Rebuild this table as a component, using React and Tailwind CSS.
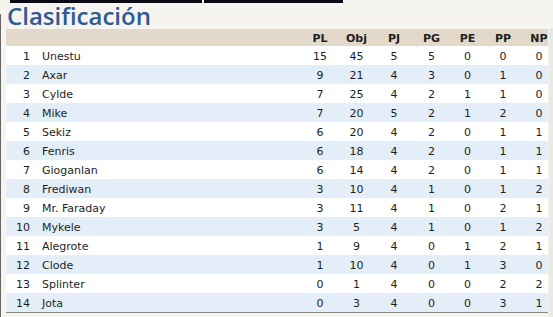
import React from "react";

const rows = [
  [1, "Unestu", 15, 45, 5, 5, 0, 0, 0],
  [2, "Axar", 9, 21, 4, 3, 0, 1, 0],
  [3, "Cylde", 7, 25, 4, 2, 1, 1, 0],
  [4, "Mike", 7, 20, 5, 2, 1, 2, 0],
  [5, "Sekiz", 6, 20, 4, 2, 0, 1, 1],
  [6, "Fenris", 6, 18, 4, 2, 0, 1, 1],
  [7, "Gioganlan", 6, 14, 4, 2, 0, 1, 1],
  [8, "Frediwan", 3, 10, 4, 1, 0, 1, 2],
  [9, "Mr. Faraday", 3, 11, 4, 1, 0, 2, 1],
  [10, "Mykele", 3, 5, 4, 1, 0, 1, 2],
  [11, "Alegrote", 1, 9, 4, 0, 1, 2, 1],
  [12, "Clode", 1, 10, 4, 0, 1, 3, 0],
  [13, "Splinter", 0, 1, 4, 0, 0, 2, 2],
  [14, "Jota", 0, 3, 4, 0, 0, 3, 1],
];

const headers = ["PL", "Obj", "PJ", "PG", "PE", "PP", "NP"];
const widths = ["w-[36px]", "w-[37px]", "w-[38px]", "w-[37px]", "w-[35px]", "w-[36px]", "w-[27px] pl-[9px]"];

export default function App() {
  return (
    <div
      className="w-[553px] h-[317px] bg-[#f5f4ef] relative overflow-hidden text-[#1e1e1e]"
      style={{ fontFamily: '"DejaVu Sans", Verdana, sans-serif' }}
    >
      <div className="absolute left-0 top-[14px] bottom-0 w-px bg-[#666]" />
      <div className="absolute right-0 top-[28px] bottom-0 w-[4px] bg-[#e9e9e6]" />
      <div className="flex h-[3px]">
        <div className="ml-[10px] w-[192px] bg-[#0a0a14]" />
        <div className="ml-[2px] w-[139px] bg-[#0a0a14]" />
      </div>
      <h1
        className="ml-[7px] h-[26px] leading-[26px] text-[24px] font-semibold text-[#2f5a93]"
        style={{ fontFamily: '"Open Sans", sans-serif' }}
      >
        Clasificación
      </h1>
      <div className="ml-[6px] w-[542px]">
        <div className="flex h-[17px] items-center bg-[#e2d9ca] text-[11px] font-bold">
          <div className="w-[30px]" />
          <div className="flex-1" />
          {headers.map((h, i) => (
            <div key={h} className={`${widths[i]} text-center leading-[17px] pt-[2px]`}>
              {h}
            </div>
          ))}
        </div>
        {rows.map((r, idx) => (
          <div
            key={r[0]}
            className={`flex h-[19px] items-center text-[11px] leading-[19px] pt-[1px] ${idx % 2 === 1 ? "bg-[#e3eef9]" : "bg-white"}`}
          >
            <div className="w-[30px] text-right pr-[6px]">{r[0]}</div>
            <div className="flex-1 pl-[6px]">{r[1]}</div>
            {r.slice(2).map((v, i) => (
              <div key={i} className={`${widths[i]} text-center`}>
                {v}
              </div>
            ))}
          </div>
        ))}
        <div className="h-px bg-[#8a8a8a]" />
      </div>
    </div>
  );
}
